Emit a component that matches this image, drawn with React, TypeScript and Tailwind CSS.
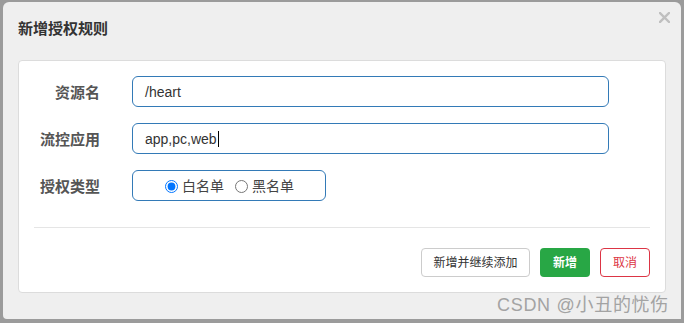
import React from 'react'

const font = "font-['Liberation_Sans','Noto_Sans_CJK_SC',sans-serif]"

function Row({ label, children }: { label: string; children: React.ReactNode }) {
  return (
    <div className="flex items-center gap-[32px]">
      <div className="w-[66px] pt-[3px] text-right text-[15px] font-bold text-[#555]">{label}</div>
      {children}
    </div>
  )
}

export default function App() {
  return (
    <div className={`relative w-[684px] h-[323px] bg-[#9b9b9b] pl-[3px] pt-[2px] ${font}`}>
      <div className="w-[678px] h-[317px] bg-[#efefef] rounded-t-[6px] rounded-bl-[4px] px-[15px] flex flex-col">
        {/* header */}
        <div className="relative h-[58px] flex items-center">
          <h1 className="text-[15px] font-bold text-[#333] -mt-[4px]">新增授权规则</h1>
          <button className="absolute right-[-4px] top-[10px] w-[11px] h-[11px] text-[#bfbfbf]">
            <svg viewBox="0 0 11 11" width="11" height="11">
              <path d="M1 1L10 10M10 1L1 10" stroke="currentColor" strokeWidth="2.4" strokeLinecap="square" />
            </svg>
          </button>
        </div>

        {/* body */}
        <div className="w-[648px] h-[233px] bg-white border border-[#dcdcdc] rounded-[4px] px-[15px] pt-[15px]">
          <div className="flex flex-col gap-[16px]">
            <Row label="资源名">
              <div className="w-[477px] h-[31px] border border-[#337ab7] rounded-[6px] px-[12px] pt-[1px] flex items-center text-[14px] text-[#333]">
                /heart
              </div>
            </Row>
            <Row label="流控应用">
              <div className="w-[477px] h-[31px] border border-[#337ab7] rounded-[6px] px-[12px] pt-[1px] flex items-center text-[14px] text-[#333]">
                app,pc,web
                <span className="inline-block w-px h-[16px] bg-black ml-[1px]" />
              </div>
            </Row>
            <Row label="授权类型">
              <div className="w-[194px] h-[31px] border border-[#337ab7] rounded-[6px] pl-[32px] pt-[1px] flex items-center text-[14px] text-[#444]">
                <label className="flex items-center gap-[4px]">
                  <input type="radio" name="t" defaultChecked className="m-0 w-[13px] h-[13px]" />
                  白名单
                </label>
                <label className="flex items-center gap-[4px] ml-[11px]">
                  <input type="radio" name="t" className="m-0 w-[13px] h-[13px]" />
                  黑名单
                </label>
              </div>
            </Row>
          </div>

          <div className="mt-[26px] border-t border-[#e5e5e5]" />

          <div className="mt-[20px] flex justify-end gap-[10px] text-[12px]">
            <button className="w-[109px] h-[29px] border border-[#cccccc] rounded-[4px] bg-white text-[#333]">
              新增并继续添加
            </button>
            <button className="w-[50px] h-[29px] rounded-[4px] bg-[#28a745] text-white font-bold">
              新增
            </button>
            <button className="w-[50px] h-[29px] border border-[#dc3545] rounded-[4px] bg-white text-[#dc3545]">
              取消
            </button>
          </div>
        </div>
      </div>

      {/* watermark */}
      <div className="absolute left-[497px] top-[294px] text-[18px] leading-[22px] text-[#a3a3a3] tracking-[0.7px]">
        CSDN @小丑的忧伤
      </div>
    </div>
  )
}
